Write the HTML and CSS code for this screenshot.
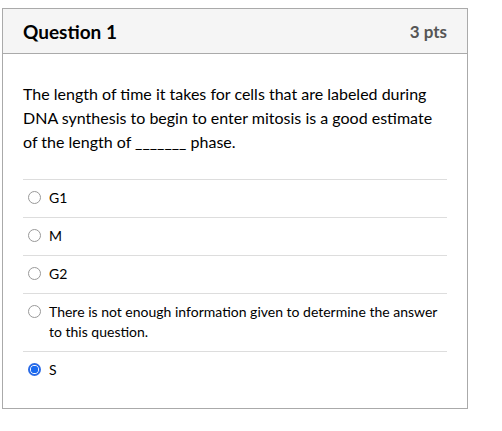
FILE: index.html
```html
<!DOCTYPE html>
<html>
<head>
<meta charset="utf-8">
<link rel="stylesheet" href="styles.css">
</head>
<body>
<div class="question">
  <div class="q-header">
    <span class="q-title">Question 1</span>
    <span class="q-pts">3 pts</span>
  </div>
  <div class="q-body">
    <p class="q-text">The length of time it takes for cells that are labeled during DNA synthesis to begin to enter mitosis is a good estimate of the length of _______ phase.</p>
    <div class="answers">
      <label class="answer"><span class="radio"></span><span class="a-text">G1</span></label>
      <label class="answer"><span class="radio"></span><span class="a-text">M</span></label>
      <label class="answer"><span class="radio"></span><span class="a-text">G2</span></label>
      <label class="answer"><span class="radio"></span><span class="a-text">There is not enough information given to determine the answer to this question.</span></label>
      <label class="answer"><span class="radio checked"></span><span class="a-text">S</span></label>
    </div>
  </div>
</div>
</body>
</html>
```

FILE: styles.css
```css
html, body {
  background: #ffffff;
}
body {
  margin: 8px 0 0 2px;
  font-family: Lato, "Noto Sans", sans-serif;
  color: #2d3b45;
}
.question {
  width: 464px;
  border: 1px solid #aaaaaa;
}
.q-header {
  display: flex;
  justify-content: space-between;
  align-items: center;
  height: 44px;
  padding: 0 20px;
  background: #f5f5f5;
  border-bottom: 1px solid #aaaaaa;
  color: #000000;
}
.q-title {
  font-size: 19px;
  font-weight: 700;
}
.q-pts {
  font-size: 17px;
  font-weight: 700;
  color: #555555;
}
.q-body {
  padding: 28px 20px 19px 20px;
}
.q-text {
  margin: 0 0 25px 0;
  font-size: 16px;
  line-height: 24px;
  color: #000000;
}
.answers {
  display: flex;
  flex-direction: column;
}
.answer {
  display: flex;
  align-items: flex-start;
  gap: 8px;
  padding: 8px 0 9px 5px;
  border-top: 1px solid #dddddd;
  font-size: 14px;
  line-height: 20px;
  color: #000000;
}
.radio {
  flex: none;
  box-sizing: border-box;
  width: 13px;
  height: 13px;
  margin-top: 3px;
  border: 1px solid #999999;
  border-radius: 50%;
  background: #ffffff;
}
.radio.checked {
  border: 2px solid #2b6be6;
  background: radial-gradient(circle, #1a6bf0 0 3.5px, #ffffff 4px);
}
```
